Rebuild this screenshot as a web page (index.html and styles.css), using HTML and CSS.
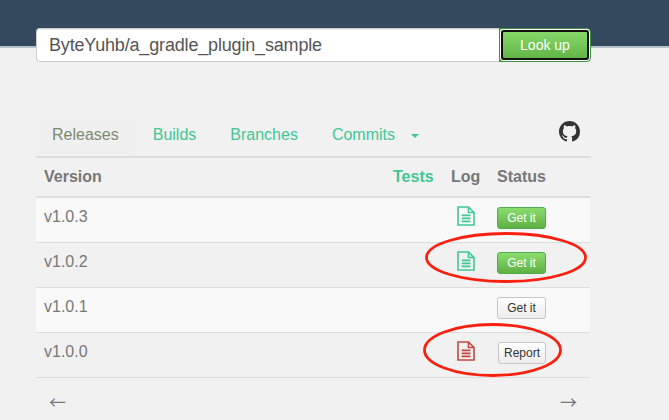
FILE: index.html
```html
<!DOCTYPE html>
<html lang="en">
<head>
<meta charset="utf-8">
<title>Releases</title>
<link rel="stylesheet" href="styles.css">
</head>
<body>
<svg class="sprite" aria-hidden="true">
  <symbol id="file" viewBox="0 0 18 20">
    <path d="M1 1h10.5L17 6.5V19H1zM11.5 1v5.5H17" fill="none" stroke="currentColor" stroke-width="1.6"/>
    <path d="M4.7 9.3h8.8M4.7 12.3h8.8M4.7 15.3h8.8" fill="none" stroke="currentColor" stroke-width="1.7"/>
  </symbol>
</svg>
<header class="banner"></header>
<main class="container">
  <form class="search">
    <input class="search-input" type="text" value="ByteYuhb/a_gradle_plugin_sample" aria-label="Repository">
    <button class="search-button" type="button">Look up</button>
  </form>
  <nav class="tabs">
    <a class="tab active">Releases</a>
    <a class="tab">Builds</a>
    <a class="tab">Branches</a>
    <a class="tab">Commits<span class="caret"></span></a>
    <svg class="github" viewBox="0 0 16 16" fill="#333"><path d="M8 0C3.58 0 0 3.58 0 8c0 3.54 2.29 6.53 5.47 7.59.4.07.55-.17.55-.38 0-.19-.01-.82-.01-1.49-2.01.37-2.53-.49-2.69-.94-.09-.23-.48-.94-.82-1.13-.28-.15-.68-.52-.01-.53.63-.01 1.08.58 1.23.82.72 1.21 1.87.87 2.33.66.07-.52.28-.87.51-1.07-1.78-.2-3.64-.89-3.64-3.95 0-.87.31-1.59.82-2.15-.08-.2-.36-1.02.08-2.12 0 0 .67-.21 2.2.82.64-.18 1.32-.27 2-.27s1.36.09 2 .27c1.53-1.04 2.2-.82 2.2-.82.44 1.1.16 1.92.08 2.12.51.56.82 1.27.82 2.15 0 3.07-1.87 3.75-3.65 3.95.29.25.54.73.54 1.48 0 1.07-.01 1.93-.01 2.2 0 .21.15.46.55.38A8.01 8.01 0 0 0 16 8c0-4.42-3.58-8-8-8z"/></svg>
  </nav>
  <section class="releases">
    <div class="row head"><span>Version</span><span class="green">Tests</span><span>Log</span><span>Status</span></div>
    <div class="row odd"><span>v1.0.3</span><span></span><svg class="log"><use href="#file"/></svg><button class="btn success">Get it</button></div>
    <div class="row marked"><span>v1.0.2</span><span></span><svg class="log"><use href="#file"/></svg><button class="btn success">Get it</button>
      <svg class="ring ring-ready" viewBox="0 0 162 51"><ellipse cx="81" cy="25.5" rx="79.5" ry="24" /></svg></div>
    <div class="row odd"><span>v1.0.1</span><span></span><span></span><button class="btn">Get it</button></div>
    <div class="row marked"><span>v1.0.0</span><span></span><svg class="log failed"><use href="#file"/></svg><button class="btn report">Report</button>
      <svg class="ring ring-report" viewBox="0 0 139 54"><ellipse cx="69.5" cy="27" rx="68" ry="25.5" /></svg></div>
  </section>
  <div class="pager"><span>←</span><span>→</span></div>
</main>
</body>
</html>
```

FILE: styles.css
```css
* { box-sizing: border-box; }
body {
  margin: 0;
  height: 420px;
  overflow: hidden;
  background: #f1f1f1;
  color: #777;
  font: 16px/24px "Liberation Sans", Arial, sans-serif;
}
.sprite { display: none; }
.banner { height: 48px; background: #34495e; border-bottom: 2px solid #b9bfc8; }
.container { position: relative; width: 555px; margin: -20px 0 0 36px; }
.search { display: flex; height: 34px; }
.search-input {
  width: 463px;
  padding: 0 12px;
  border: 1px solid #ccc;
  border-right: 0;
  border-radius: 4px 0 0 4px;
  background: #fff;
  box-shadow: inset 0 1px 1px rgba(0,0,0,.075);
  color: #555;
  font: 18px "Liberation Sans", Arial, sans-serif;
  letter-spacing: -.17px;
}
.search-button {
  position: relative;
  width: 92px;
  padding: 0;
  border: 1px solid #3e8f3e;
  border-radius: 0 4px 4px 0;
  background: linear-gradient(#8add6d, #60b044);
  color: #fff;
  font: 14px "Liberation Sans", Arial, sans-serif;
}
.search-button::after {
  content: "";
  position: absolute;
  inset: 1px;
  border: 2px solid #101010;
  border-radius: 3px;
  box-shadow: 0 0 0 1px #fff;
}
.tabs { display: flex; height: 96px; padding-top: 52px; border-bottom: 2px solid #ddd; }
.tab { display: flex; align-items: center; padding: 0 16px; margin-right: 2px; color: #3fc796; }
.tab.active { background: #f0f0f0; color: #7b8b6f; }
.caret { margin: 2px 0 0 16px; border: 4px solid transparent; border-top-color: #3fc796; border-bottom: 0; }
.github { width: 21px; height: 21px; margin: 7px 11px 0 auto; }
.releases { width: 554px; }
.row {
  display: grid;
  grid-template-columns: 349px 58px 46px 85px;
  height: 45px;
  padding: 7px 8px 0;
  border-bottom: 1px solid #ddd;
}
.row.head { height: 40px; border-bottom-width: 2px; font-weight: bold; }
.row.odd { background: #f9f9f9; }
.row.marked { position: relative; }
.green, .log { color: #3fc796; }
.log { width: 18px; height: 20px; margin: 1px 0 0 6px; }
.log.failed { color: #c0473f; }
.btn {
  width: 49px;
  height: 22px;
  margin-top: 2px;
  padding: 0;
  border: 1px solid #c6c6c6;
  border-radius: 3px;
  background: linear-gradient(#fff, #ececec);
  color: #333;
  font: 12px "Liberation Sans", Arial, sans-serif;
}
.btn.success { border-color: #4cae4c; background: linear-gradient(#8add6d, #60b044); color: #fff; }
.btn.report { width: 48px; margin-left: 1px; }
.ring { position: absolute; fill: none; stroke: #fa2010; stroke-width: 2.8; }
.ring-ready { left: 389px; top: -11px; width: 162px; height: 51px; }
.ring-report { left: 387px; top: -10px; width: 139px; height: 54px; }
.pager {
  display: flex;
  justify-content: space-between;
  padding: 12px 14px 0 13px;
  font-family: "Noto Sans CJK SC", sans-serif;
  font-size: 17px;
}
```
